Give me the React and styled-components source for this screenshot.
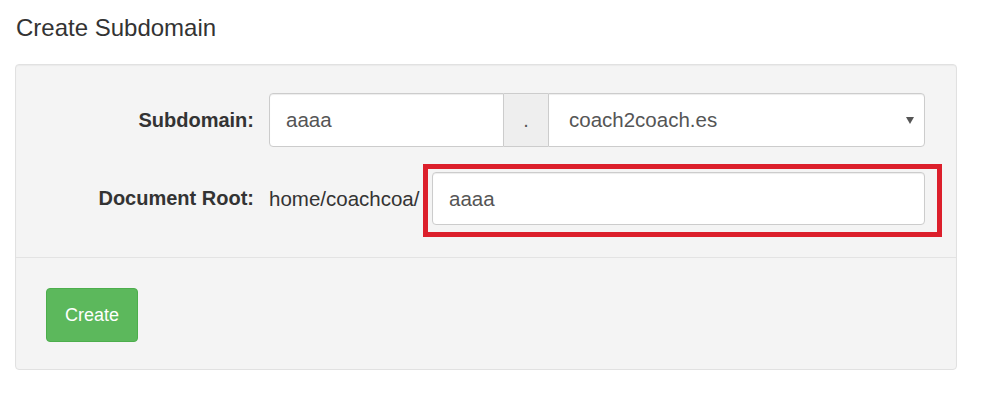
import React from 'react';
import styled, { createGlobalStyle } from 'styled-components';

const GlobalStyle = createGlobalStyle`
  html, body {
    margin: 0;
    padding: 0;
    background: #ffffff;
  }
  body {
    font-family: "Liberation Sans", Arial, sans-serif;
    color: #333333;
  }
`;

const Page = styled.div`
  width: 942px;
  margin-left: 15px;
`;

const Title = styled.h3`
  margin: 15px 0 23px 1px;
  font-size: 24px;
  font-weight: 400;
  line-height: 1.1;
  color: #333333;
`;

const Well = styled.div`
  background: #f4f4f4;
  border: 1px solid #e1e1e1;
  border-radius: 4px;
  box-shadow: inset 0 1px 1px rgba(0, 0, 0, 0.04);
`;

const FormBody = styled.div`
  display: grid;
  grid-template-columns: 238px 1fr;
  column-gap: 15px;
  row-gap: 25px;
  align-items: center;
  padding: 28px 31px 32px 0;
`;

const Label = styled.label`
  text-align: right;
  font-size: 20px;
  font-weight: 700;
  color: #333333;
`;

const Field = styled.div`
  position: relative;
  display: flex;
  align-items: center;
  height: ${p => p.$h || 54}px;
`;

const Input = styled.div`
  box-sizing: border-box;
  flex: ${p => (p.$grow ? '1 1 auto' : '0 0 auto')};
  width: ${p => (p.$w ? `${p.$w}px` : 'auto')};
  height: 100%;
  display: flex;
  align-items: center;
  padding-left: 16px;
  background: #ffffff;
  border: 1px solid #cccccc;
  border-radius: ${p => p.$radius || '4px'};
  box-shadow: inset 0 1px 1px rgba(0, 0, 0, 0.075);
  font-size: 20.5px;
  color: #555555;
`;

const Addon = styled.div`
  box-sizing: border-box;
  width: 44px;
  height: 100%;
  display: flex;
  align-items: center;
  justify-content: center;
  background: #eeeeee;
  border-top: 1px solid #cccccc;
  border-bottom: 1px solid #cccccc;
  font-size: 20px;
  color: #555555;
`;

const Select = styled(Input)`
  padding-left: 20px;
  padding-right: 10px;
  justify-content: space-between;
`;

const Caret = styled.span`
  width: 0;
  height: 0;
  border-left: 4.5px solid transparent;
  border-right: 4.5px solid transparent;
  border-top: 7px solid #555555;
`;

const Prefix = styled.span`
  flex: 0 0 auto;
  width: 163px;
  font-size: 20.5px;
  color: #333333;
  white-space: nowrap;
`;

const Highlight = styled.div`
  position: absolute;
  left: 154px;
  top: -8px;
  right: -17px;
  bottom: -12px;
  border: 5px solid #dc1f2b;
  pointer-events: none;
`;

const Footer = styled.div`
  border-top: 1px solid #e3e3e3;
  padding: 30px 30px 27px;
`;

const Button = styled.button`
  box-sizing: border-box;
  width: 92px;
  height: 54px;
  padding: 0;
  background: #5cb85c;
  border: 1px solid #4cae4c;
  border-radius: 4px;
  color: #ffffff;
  font-family: "Liberation Sans", Arial, sans-serif;
  font-size: 18px;
  cursor: pointer;
`;

export default function App() {
  return (
    <Page>
      <GlobalStyle />
      <Title>Create Subdomain</Title>
      <Well>
        <FormBody>
          <Label>Subdomain:</Label>
          <Field>
            <Input $w={235} $radius="4px 0 0 4px">aaaa</Input>
            <Addon>.</Addon>
            <Select $grow $radius="0 4px 4px 0">
              coach2coach.es
              <Caret />
            </Select>
          </Field>
          <Label>Document Root:</Label>
          <Field $h={53}>
            <Prefix>home/coachcoa/</Prefix>
            <Input $grow>aaaa</Input>
            <Highlight />
          </Field>
        </FormBody>
        <Footer>
          <Button>Create</Button>
        </Footer>
      </Well>
    </Page>
  );
}
